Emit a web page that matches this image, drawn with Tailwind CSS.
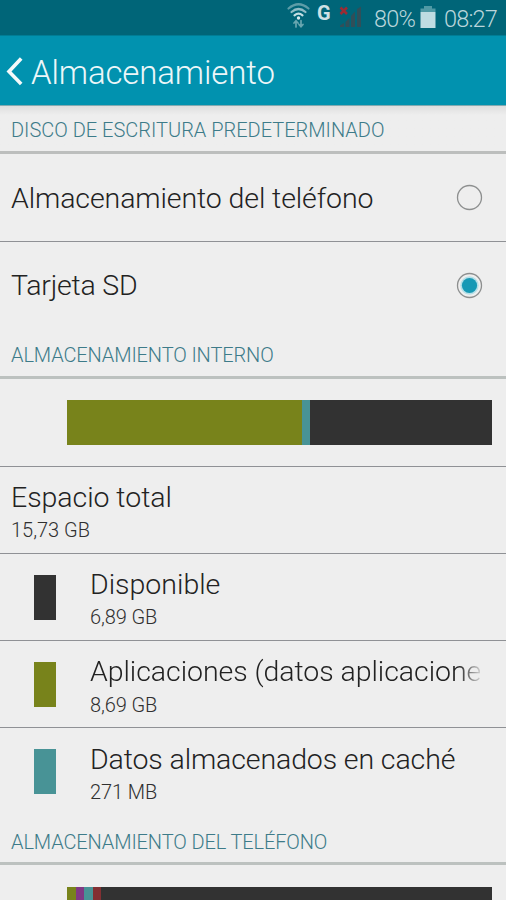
<!DOCTYPE html>
<html lang="es">
<head>
<meta charset="utf-8">
<title>Almacenamiento</title>
<script src="https://cdn.jsdelivr.net/npm/@tailwindcss/browser@4"></script>
</head>
<body class="w-[506px] h-[900px] overflow-hidden bg-[#eeeeee] font-['Roboto','Liberation_Sans',sans-serif] font-light text-[#222222]">
<div class="h-[900px] overflow-hidden flex flex-col whitespace-nowrap [&>*]:shrink-0">
  <div class="h-[35px] bg-[#006578] flex justify-end pr-[8px] text-[#b9d4da]">
    <svg class="w-[24px] h-[30px] mr-[6px]" viewBox="0 0 24 30" fill="none" stroke-linecap="round">
      <path d="M1.500 8.500Q11.500 0 21.500 8.500" stroke="#5d9da8" stroke-width="2.200"/>
      <path d="M4.500 12Q11.500 6 18.500 12" stroke="#8fbcc5" stroke-width="2.200"/>
      <path d="M7.500 15.300Q11.500 12 15.500 15.300" stroke="#c5dfe4" stroke-width="2.200"/>
      <circle cx="11.500" cy="18" r="1.700" fill="#d8eaee"/>
      <path d="M9 27V21M7 23L9 20.800L11 23M14 20.500V26.500M12 24.500L14 26.700L16 24.500" stroke="#68a6b0" stroke-width="1.700"/>
    </svg>
    <span class="w-[14px] mr-[8px] text-[20px] leading-[26px] font-bold text-[#cfe1e5]">G</span>
    <svg class="w-[24px] h-[30px] mr-[11px]" viewBox="0 0 24 30">
      <path d="M1 27V25.500L5 23V27ZM6.500 27V22L10.500 18V27ZM12 27V16L16 11.500V27ZM18 27V9L22 6.500V27Z" fill="#304f59"/>
      <path d="M1.500 7.500L8 14M8 7.500L1.500 14" stroke="#9c2c34" stroke-width="2.500"/>
    </svg>
    <span class="w-[46px] text-[23.5px] leading-[38px] font-light tracking-[-0.8px] text-[#b9d5db]">80%</span>
    <svg class="w-[16px] h-[30px] mr-[8px]" viewBox="0 0 16 30">
      <path d="M4 6H12V8.500H15.500V12H.5V8.500H4Z" fill="#4f99a5"/><path d="M.5 12H15.500V28H.5Z" fill="#bfdce2"/>
    </svg>
    <span class="w-[54px] text-[23.5px] leading-[38px] font-light tracking-[-0.8px] text-[#b9d5db]">08:27</span>
  </div>
  <header class="h-[71px] bg-[#0192af] border-t border-t-[#007d95] border-b border-b-[#82aab1] flex pl-[6px] pt-[1px]">
    <svg class="w-[17px] h-[30px] mt-[19px] mr-[8px]" viewBox="0 0 17 30" fill="none"><path d="M15.200 2.500L3 15.500L15.200 28" stroke="#f4f9fa" stroke-width="3.600"/></svg>
    <h1 class="text-[33px] leading-[71px] tracking-[-0.13px] text-[#edf7f9]">Almacenamiento</h1>
  </header>
  <section class="h-[48px] pl-[11px] border-b-[3px] border-[#bcbebd] bg-linear-to-b from-[#dedede] from-0% to-[#eeeeee] to-20%">
    <h2 class="text-[20px] leading-[48px] text-[#3d7b89]">DISCO DE ESCRITURA PREDETERMINADO</h2>
  </section>
  <div class="h-[88px] pl-[11px] pr-[23px] border-b border-[#8f9195] flex items-center justify-between">
    <span class="pt-[4px] text-[28.5px] tracking-[-0.1px]">Almacenamiento del teléfono</span>
    <svg class="w-[27px] h-[27px]" viewBox="0 0 27 27"><circle cx="13.500" cy="13.500" r="12" fill="none" stroke="#8d8f8f" stroke-width="1.300"/></svg>
  </div>
  <div class="h-[87px] pl-[11px] pr-[23px] flex items-center justify-between">
    <span class="pt-[2px] text-[28.5px] tracking-[-0.2px]">Tarjeta SD</span>
    <svg class="w-[27px] h-[27px]" viewBox="0 0 27 27"><circle cx="13.500" cy="13.500" r="12" fill="none" stroke="#8d8f8f" stroke-width="1.300"/><circle cx="13.500" cy="13.500" r="9.200" fill="#b5dfe7"/><circle cx="13.500" cy="13.500" r="7.600" fill="#1799b5"/></svg>
  </div>
  <section class="h-[50px] pl-[11px] border-b-[3px] border-[#bcc1bf]">
    <h2 class="text-[20px] leading-[52px] tracking-[-0.12px] text-[#3d7b89]">ALMACENAMIENTO INTERNO</h2>
  </section>
  <div class="h-[88px] pl-[67px] pr-[14px] pt-[21px] border-b border-[#8f9195]">
    <div class="h-[45px] flex"><div class="w-[235px] bg-[#78831b]"></div><div class="w-[8px] bg-[#489396]"></div><div class="flex-1 bg-[#323232]"></div></div>
  </div>
  <div class="h-[87px] pl-[11px] pt-[14px] border-b border-[#8f9195]">
    <div class="text-[28.5px] leading-[34px] tracking-[-0.05px]">Espacio total</div>
    <div class="text-[20px] leading-[31px] text-[#303030]">15,73 GB</div>
  </div>
  <div class="h-[87px] pl-[34px] border-b border-[#8f9195] flex items-start">
    <div class="w-[22px] h-[45px] mt-[21px] mr-[34px] bg-[#323232]"></div>
    <div class="pt-[14px]"><div class="text-[28.5px] leading-[34px]">Disponible</div><div class="text-[20px] leading-[31px] tracking-[-0.1px] text-[#303030]">6,89 GB</div></div>
  </div>
  <div class="h-[87px] pl-[34px] border-b border-[#8f9195] flex items-start">
    <div class="w-[22px] h-[45px] mt-[21px] mr-[34px] bg-[#78831b]"></div>
    <div class="pt-[14px]"><div class="w-[390px] overflow-hidden text-[28.5px] leading-[34px] tracking-[-0.06px] mask-r-from-[368px] mask-r-to-[394px]">Aplicaciones (datos aplicacione</div><div class="text-[20px] leading-[32px] tracking-[-0.1px] text-[#303030]">8,69 GB</div></div>
  </div>
  <div class="h-[87px] pl-[34px] flex items-start">
    <div class="w-[22px] h-[45px] mt-[21px] mr-[34px] bg-[#489396]"></div>
    <div class="pt-[15px]"><div class="text-[28.5px] leading-[34px] tracking-[-0.12px]">Datos almacenados en caché</div><div class="text-[20px] leading-[31px] tracking-[-0.1px] text-[#303030]">271 MB</div></div>
  </div>
  <section class="h-[50px] pl-[11px] border-b-[3px] border-[#bcc1bf]">
    <h2 class="text-[20px] leading-[54px] tracking-[-0.12px] text-[#3d7b89]">ALMACENAMIENTO DEL TELÉFONO</h2>
  </section>
  <div class="pl-[67px] pr-[14px] pt-[22px]">
    <div class="h-[45px] flex"><div class="w-[9px] bg-[#78831b]"></div><div class="w-[8px] bg-[#803984]"></div><div class="w-[9px] bg-[#489396]"></div><div class="w-[8px] bg-[#833033]"></div><div class="flex-1 bg-[#323232]"></div></div>
  </div>
</div>
</body>
</html>
